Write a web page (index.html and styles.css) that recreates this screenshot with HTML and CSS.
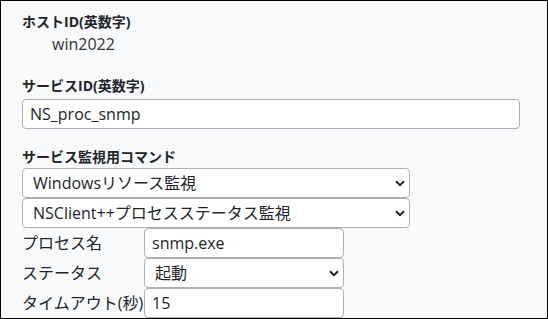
FILE: index.html
```html
<!DOCTYPE html>
<html lang="ja">
<head>
    <meta charset="UTF-8">
    <meta name="viewport" content="width=device-width, initial-scale=1.0">
    <title>サービス設定</title>
    <link rel="stylesheet" href="styles.css">
</head>
<body>
    <div class="form">
        <label class="field-label">ホストID(英数字)</label>
        <div class="host-value">win2022</div>

        <label class="field-label service-label" for="serviceId">サービスID(英数字)</label>
        <input type="text" id="serviceId" class="text-input service-input" value="NS_proc_snmp">

        <label class="field-label command-label">サービス監視用コマンド</label>
        <div class="select-wrap wide">
            <select class="select-input">
                <option>Windowsリソース監視</option>
            </select>
            <svg class="chevron" width="10" height="7" viewBox="0 0 10 7"><path d="M1 1.2l4 4 4-4" fill="none" stroke="#222" stroke-width="2"/></svg>
        </div>
        <div class="select-wrap wide">
            <select class="select-input">
                <option>NSClient++プロセスステータス監視</option>
            </select>
            <svg class="chevron" width="10" height="7" viewBox="0 0 10 7"><path d="M1 1.2l4 4 4-4" fill="none" stroke="#222" stroke-width="2"/></svg>
        </div>

        <div class="params">
            <span class="param-label">プロセス名</span>
            <input type="text" class="text-input" value="snmp.exe">

            <span class="param-label">ステータス</span>
            <div class="select-wrap">
                <select class="select-input">
                    <option>起動</option>
                    <option>停止</option>
                </select>
                <svg class="chevron" width="10" height="7" viewBox="0 0 10 7"><path d="M1 1.2l4 4 4-4" fill="none" stroke="#222" stroke-width="2"/></svg>
            </div>

            <span class="param-label">タイムアウト(秒)</span>
            <input type="text" class="text-input" value="15">
        </div>
    </div>
</body>
</html>
```

FILE: styles.css
```css
* {
    box-sizing: border-box;
}
body {
    margin: 0;
    height: 319px;
    border: 1px solid #000;
    background-color: #f8f9fa;
    overflow: hidden;
    color: #212529;
    font-family: "Open Sans", "Noto Sans CJK JP", sans-serif;
}
.form {
    padding: 10px 0 0 21px;
}
.field-label {
    display: block;
    font-size: 14px;
    font-weight: bold;
    line-height: 21px;
}
.host-value {
    padding-left: 30px;
    font-size: 16px;
    line-height: 24px;
    color: #333;
}
.service-label {
    margin-top: 19px;
    margin-bottom: 3px;
}
.command-label {
    margin-top: 17px;
    margin-bottom: 1px;
}
.text-input,
.select-input {
    display: block;
    width: 100%;
    height: 30px;
    margin: 0;
    padding: 0 7px;
    font-family: inherit;
    font-size: 16px;
    color: #212529;
    background-color: #fff;
    border: 1px solid #adb2b8;
    border-radius: 4px;
    outline: none;
}
.service-input {
    width: 498px;
}
.select-input {
    appearance: none;
    -webkit-appearance: none;
    padding: 0 24px 0 10px;
}
.select-wrap {
    position: relative;
}
.select-wrap.wide {
    width: 388px;
}
.chevron {
    position: absolute;
    right: 5px;
    top: 12px;
    pointer-events: none;
}
.params {
    display: grid;
    grid-template-columns: 122px 200px;
}
.param-label {
    font-size: 16px;
    line-height: 30px;
    white-space: nowrap;
}
```
